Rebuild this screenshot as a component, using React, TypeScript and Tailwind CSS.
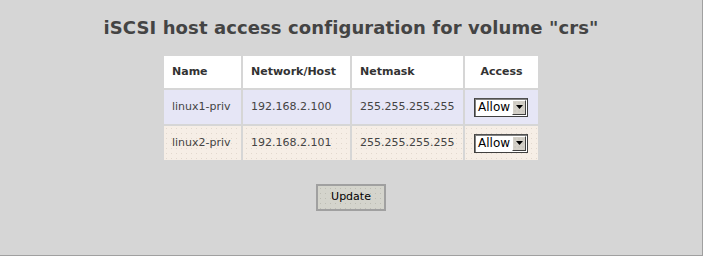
const rows = [
  { name: 'linux1-priv', host: '192.168.2.100', mask: '255.255.255.255', tone: 'a' },
  { name: 'linux2-priv', host: '192.168.2.101', mask: '255.255.255.255', tone: 'b' },
];

function AccessSelect() {
  return (
    <div className="inline-flex h-[19px] w-[54px] items-center border border-[#404040] border-t-[#505050] bg-white shadow-[inset_1px_1px_0_#808080]">
      <span className="flex-1 pl-[3px] text-[12px] leading-none text-black">Allow</span>
      <span className="mr-[1px] flex h-[15px] w-[14px] items-center justify-center border border-t-white border-l-white border-r-[#404040] border-b-[#404040] bg-[#d4d0c8] bg-[radial-gradient(circle,#bcb8b0_0.5px,transparent_0.8px)] bg-[length:4px_4px]">
        <svg width="7" height="4" viewBox="0 0 7 4">
          <path d="M0 0h7L3.5 4z" fill="#000" />
        </svg>
      </span>
    </div>
  );
}

export default function App() {
  return (
    <div
      className="flex h-[256px] w-[703px] flex-col items-center border-r border-b border-[#a0a0a0] bg-[#d6d6d6] text-[#444]"
      style={{ fontFamily: '"DejaVu Sans", Verdana, sans-serif' }}
    >
      {/* Title */}
      <h1 className="mt-[17px] text-[18px] font-bold leading-[22px] tracking-[0.1px] text-[#444]">
        iSCSI host access configuration for volume "crs"
      </h1>

      {/* Hosts */}
      <table className="mt-[15px] border-separate border-spacing-[2px] text-[11px]">
        <thead>
          <tr className="h-[32px] bg-white text-left font-bold text-[#333]">
            <th className="w-[77px] pl-[8px]">Name</th>
            <th className="w-[107px] pl-[8px]">Network/Host</th>
            <th className="w-[111px] pl-[8px]">Netmask</th>
            <th className="w-[73px] text-center">Access</th>
          </tr>
        </thead>
        <tbody>
          {rows.map((r) => (
            <tr
              key={r.name}
              className={
                r.tone === 'a'
                  ? 'h-[34px] bg-[#e6e6f6]'
                  : 'h-[34px] bg-[#f6eee6] bg-[radial-gradient(circle,#e2d8ce_0.5px,transparent_0.8px)] bg-[length:5px_5px]'
              }
            >
              <td className="pl-[8px]">{r.name}</td>
              <td className="pl-[8px]">{r.host}</td>
              <td className="pl-[8px]">{r.mask}</td>
              <td className="pl-[9px]">
                <AccessSelect />
              </td>
            </tr>
          ))}
        </tbody>
      </table>

      <button className="mt-[22px] h-[27px] w-[70px] border-2 border-[#a0a0a0] bg-[#d4d4cc] bg-[radial-gradient(circle,#bdbdb4_0.5px,transparent_0.8px)] bg-[length:5px_5px] text-[11px] text-black">
        Update
      </button>
    </div>
  );
}
